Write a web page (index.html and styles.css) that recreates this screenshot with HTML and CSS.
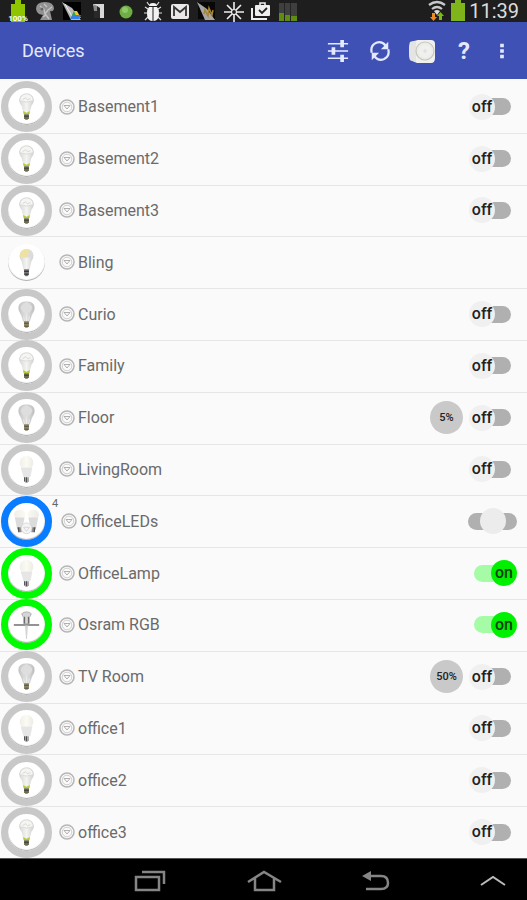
FILE: index.html
```html
<!DOCTYPE html>
<html lang="en">
<head>
    <meta charset="UTF-8">
    <meta name="viewport" content="width=device-width, initial-scale=1.0">
    <title>Devices</title>
    <link rel="stylesheet" href="styles.css">
</head>
<body>
    <!-- shared shapes -->
    <svg class="sprites" aria-hidden="true">
        <defs>
            <linearGradient id="glass" x1="0" x2="1">
                <stop offset="0" stop-color="#d6d6d4"/>
                <stop offset="0.5" stop-color="#f4f4f2"/>
                <stop offset="1" stop-color="#cfcfcf"/>
            </linearGradient>
            <linearGradient id="milk" x1="0" x2="1">
                <stop offset="0" stop-color="#f1f0e8"/>
                <stop offset="0.5" stop-color="#fbfaf3"/>
                <stop offset="1" stop-color="#ecebe4"/>
            </linearGradient>
            <linearGradient id="frost" x1="0" x2="1">
                <stop offset="0" stop-color="#c6c6c6"/>
                <stop offset="0.5" stop-color="#e2e2e2"/>
                <stop offset="1" stop-color="#bebebe"/>
            </linearGradient>
        </defs>
        <symbol id="bulb-green" viewBox="0 0 38 38">
            <path d="M11.500 12.500a7.500 7 0 0 1 15 0c0 3-1.500 4-2.500 6l-2 8h-6l-2-8c-1-2-2.500-3-2.500-6z" fill="url(#glass)"/>
            <path d="M12 13a7 7 0 0 1 14 0q-7 3-14 0z" fill="#f5f5f3" stroke="#d0d0cd" stroke-width=".7"/>
            <path d="M15 12l3-2 2 2 3-1" fill="none" stroke="#cfcfcb" stroke-width=".8"/>
            <path d="M15.500 23.500l3.500 2 3.500-2-.5 3.500h-6z" fill="#b5cc34"/>
            <path d="M16.500 27h5v4l-1.500 1.500h-2l-1.500-1.500z" fill="#6c6a50"/>
            <path d="M16.500 29h5" stroke="#34342a" stroke-width=".8"/>
        </symbol>
        <symbol id="bulb-clear" viewBox="0 0 38 38">
            <path d="M11 12q0-6 8-6t8 6c0 4-2 5-3 8l-2 6h-6l-2-6c-1-3-3-4-3-8z" fill="url(#frost)" stroke="#bdbdbd" stroke-width=".6"/>
            <path d="M13 12q1-4 6-4t6 4q-1 3-3 5h-6q-2-2-3-5z" fill="#dedede"/>
            <path d="M16 21l1 5M19 20v6M22 21l-1 5" stroke="#efefef" stroke-width=".8"/>
            <path d="M16.500 26h5v5l-1.500 1.500h-2l-1.500-1.500z" fill="#8b8467"/>
            <path d="M16.500 28h5M17 31h4" stroke="#45433a" stroke-width=".8"/>
        </symbol>
        <symbol id="bulb-white" viewBox="0 0 38 38">
            <path d="M12 12a7 7 0 0 1 14 0c0 2-1 4-2 5h-10c-1-1-2-3-2-5z" fill="url(#milk)"/>
            <path d="M13 17h12l-2 10h-7z" fill="#e6e6e6"/>
            <path d="M16.500 27h5v4l-1.500 1.500h-2l-1.500-1.500z" fill="#a5a5a5"/>
            <path d="M17 27v4M19 27v5" stroke="#444" stroke-width=".9"/>
        </symbol>
        <symbol id="bulb-yellow" viewBox="0 0 38 38">
            <path d="M12 12a7 7 0 0 1 14 0c0 3-1 4-2 6l-2 9h-6l-2-9c-1-2-2-3-2-6z" fill="url(#glass)"/>
            <path d="M12 13a7 7 0 0 1 10-7q-1 6-4 8z" fill="#efe2a0"/>
            <path d="M22 6a7 7 0 0 1 4 7l-8 1q3-3 4-8z" fill="#dcdcda"/>
            <path d="M16.500 26h5v5.500l-1.500 1.500h-2l-1.500-1.500z" fill="#777"/>
            <path d="M16.500 28h5M17 31h4" stroke="#222"/>
        </symbol>
        <symbol id="bulb-pair" viewBox="0 0 38 38">
            <path d="M6 12q1-5 6-5t6 5l-2 5H8zM20 12q1-5 6-5t6 5l-2 5h-8z" fill="url(#milk)"/>
            <path d="M7 15h10l-2 10H9zM21 15h10l-2 10h-6z" fill="#dcdcdc"/>
            <path d="M9 25h5v5h-3zM24 25h5l-2 5h-3z" fill="#8e8e8e"/>
            <path d="M11 25v5M27 25v5" stroke="#444"/>
            <circle cx="19" cy="26" r="5.500" fill="#f4f4f4" stroke="#d0d0d0" stroke-width=".8"/>
            <path d="M16 25h6l-3 4z" fill="none" stroke="#d0d0d0" stroke-width=".8"/>
        </symbol>
        <symbol id="spot" viewBox="0 0 38 38">
            <path d="M14 8q5-4 10 0l-2 4v6h-6v-6z" fill="#d5d5d5" stroke="#a5a5a5" stroke-width=".8"/>
            <path d="M17 11v7M21 11v7" stroke="#6c6c6c" stroke-width="1.200"/>
            <path d="M6 19.500h26" stroke="#858585" stroke-width="1.800"/>
            <path d="M17.500 20h3l-1 14h-1z" fill="#d4d4d4"/>
        </symbol>
        <symbol id="hub" viewBox="0 0 16 16">
            <circle cx="8" cy="8" r="7" fill="none" stroke="#b6b6b6" stroke-width="1.500"/>
            <circle cx="8" cy="8" r="4.800" fill="none" stroke="#cfcfcf"/>
            <path d="M5 6.500h6L8 10z" fill="#fafafa" stroke="#b0b0b0" stroke-linejoin="round"/>
        </symbol>
    </svg>

    <div class="status-bar">
        <div class="status-icons">
            <svg viewBox="0 0 20 22"><path d="M3 4h4V0h6v4h4v18H3z" fill="#8fc400"/><text x="10" y="21" class="tiny">100%</text></svg>
            <svg viewBox="0 0 20 22"><path d="M1 9q0-7 9-7t9 7q-1 3-4 2l2 9H5l3-5-4-1-2-2z" fill="#929292"/><path d="M5 6l4 3 1 5 3-4 4-3M8 17l3-2 3 4M9 4l3 3" fill="none" stroke="#c4c4c4" stroke-width="1.300"/><circle cx="7" cy="9" r="1.500" fill="#666"/></svg>
            <svg viewBox="0 0 20 22"><path d="M1 2h18v18H1z"/><path d="M0 2l10 6 9 12H9z" fill="#b7b7b7"/><path d="M3 4l8 14" stroke="#eee"/><path d="M8 19l4-8 4 4z" fill="#28a55d"/><path d="M12 11h3l4 7h-4z" fill="#f3c62d"/><path d="M8 19l3-4h8l-2 4z" fill="#377fe8"/></svg>
            <svg viewBox="0 0 20 22"><path d="M5 4h10v14H5z" fill="#292929"/><path d="M4 4h11v14h-4V8L8 6H4z" fill="#d8d8d8"/><path d="M4 4l4 2v5H5z" fill="#8a8a8a"/></svg>
            <svg viewBox="0 0 20 22"><circle cx="10" cy="12" r="6.500" fill="#6fae45"/><circle cx="9" cy="10" r="3" fill="#8fc868"/></svg>
            <svg viewBox="0 0 20 22"><path d="M6 5L4 2M14 5l2-3M5 9L2 7M15 9l3-2M4 13H1M16 13h3M5 17l-3 3M15 17l3 3" stroke="#ddd" stroke-width="1.200"/><path d="M6 6q0-3 4-3t4 3z" fill="#f2f2f2"/><path d="M9.500 7v14C5 21 4 17 4 13q0-4 2-6zM10.500 7v14c4.500 0 5.500-4 5.500-8q0-4-2-6z" fill="#f2f2f2"/></svg>
            <svg viewBox="0 0 20 22"><rect x="1" y="4" width="18" height="15" rx="2" fill="#e8e8e8"/><path d="M4 16V7l6 5 6-5v9" fill="none" stroke="#333" stroke-width="1.800"/></svg>
            <svg viewBox="0 0 20 22"><path d="M1 2h17v17H1z" fill="#080808"/><path d="M0 2l10 7 8 11H8z" fill="#a6a6a6"/><path d="M7 14l1-4 3 6 1-8 3 7 1-5" fill="none" stroke="#a78533" stroke-width="1.500"/></svg>
            <svg viewBox="0 0 20 22"><g stroke="#eee" stroke-width="1.600"><path d="M10 2v7M10 15v7M0 12h7M13 12h7M3 5l5 5M12 14l5 5M17 5l-5 5M8 14l-5 5"/></g><circle cx="10" cy="12" r="2.500" fill="none" stroke="#eee" stroke-width="1.200"/></svg>
            <svg viewBox="0 0 20 22"><path d="M1 8v11h15" fill="none" stroke="#eee" stroke-width="2"/><path d="M9 5V3h5v2" fill="none" stroke="#eee" stroke-width="1.600"/><rect x="4" y="5" width="15" height="11" rx="1" fill="#eee"/><path d="M8 10l3 3 5-5" fill="none" stroke="#222" stroke-width="1.800"/></svg>
            <svg viewBox="0 0 20 22"><path d="M1 3h18v18H1z" fill="#3f3f3f"/><path d="M1 13h5v8H1zM7 15h5v6H7zM13 16h6v5h-6z" fill="#5d8c10"/><path d="M6.500 3v18M12.500 3v18" stroke="#252525"/></svg>
        </div>
        <div class="status-right">
            <svg class="wifi" viewBox="0 0 20 22"><g fill="none" stroke="#c9c9c9" stroke-width="2.200"><path d="M2 5q8-6 16 0M5 9q5-4 10 0"/></g><path d="M7 11q3-2 6 0l-3 4z" fill="#ddd"/><path d="M5 13h3v4h2l-3.500 4L3 17h2z" fill="#f08a22"/><path d="M12 20h3v-4h2l-3.500-4-3.500 4h2z" fill="#7cba12"/></svg>
            <svg class="battery" viewBox="0 0 14 22"><path d="M0 3h4V0h6v3h4v18H0z" fill="#7fb51a"/></svg>
            <span class="clock">11:39</span>
        </div>
    </div>

    <header class="app-bar">
        <h1>Devices</h1>
        <div class="actions">
            <button type="button" aria-label="Settings"><svg viewBox="0 0 24 24"><g stroke="#e3eaff" fill="none"><path d="M1 4h22M1 12h22M1 20h22" stroke-width="1.600"/><path d="M16.500 0v8M7 8v8M16.500 16v8" stroke-width="4"/></g></svg></button>
            <button type="button" aria-label="Refresh"><svg viewBox="0 0 24 24"><g stroke="#e3eaff" fill="none" stroke-width="2.400"><path d="M3 14Q1 6 8 3q6-2 10 3M21 10q2 8-5 11-6 2-10-3"/></g><path d="M21 2v8h-8zM3 22v-8h8z" fill="#e3eaff"/></svg></button>
            <button type="button" aria-label="Hub"><svg class="wide" viewBox="0 0 28 26"><path d="M2 4l8-2h13q4 0 4 4v14q0 5-4 5H9l-7-3q-2-9 0-18z" fill="#f0f0ec"/><path d="M2 4l6-1v21l-6-2q-2-9 0-18z" fill="#e4e4e2"/><circle cx="17" cy="13" r="9" fill="#ebebe8" stroke="#c6c6c3" stroke-width="1.200"/><circle cx="17" cy="13" r="6.500" fill="#f0f0ee"/><path d="M15 13h4M17 11v4" stroke="#dcdcda"/></svg></button>
            <button type="button" class="help" aria-label="Help">?</button>
            <button type="button" class="more" aria-label="More"><svg viewBox="0 0 24 24"><path d="M10 4h4v4h-4zM10 10h4v4h-4zM10 16h4v4h-4z" fill="#e3eaff"/></svg></button>
        </div>
    </header>

    <ul class="devices">
        <li class="device">
            <span class="avatar"><svg><use href="#bulb-green"/></svg></span><span class="count"></span>
            <svg class="hub"><use href="#hub"/></svg><span class="name">Basement1</span>
            <label class="switch"><input type="checkbox" aria-label="Basement1"><span class="thumb">off</span></label>
        </li>
        <li class="device">
            <span class="avatar"><svg><use href="#bulb-green"/></svg></span><span class="count"></span>
            <svg class="hub"><use href="#hub"/></svg><span class="name">Basement2</span>
            <label class="switch"><input type="checkbox" aria-label="Basement2"><span class="thumb">off</span></label>
        </li>
        <li class="device">
            <span class="avatar"><svg><use href="#bulb-green"/></svg></span><span class="count"></span>
            <svg class="hub"><use href="#hub"/></svg><span class="name">Basement3</span>
            <label class="switch"><input type="checkbox" aria-label="Basement3"><span class="thumb">off</span></label>
        </li>
        <li class="device">
            <span class="avatar plain"><svg><use href="#bulb-yellow"/></svg></span><span class="count"></span>
            <svg class="hub"><use href="#hub"/></svg><span class="name">Bling</span>
        </li>
        <li class="device">
            <span class="avatar"><svg><use href="#bulb-clear"/></svg></span><span class="count"></span>
            <svg class="hub"><use href="#hub"/></svg><span class="name">Curio</span>
            <label class="switch"><input type="checkbox" aria-label="Curio"><span class="thumb">off</span></label>
        </li>
        <li class="device">
            <span class="avatar"><svg><use href="#bulb-green"/></svg></span><span class="count"></span>
            <svg class="hub"><use href="#hub"/></svg><span class="name">Family</span>
            <label class="switch"><input type="checkbox" aria-label="Family"><span class="thumb">off</span></label>
        </li>
        <li class="device">
            <span class="avatar"><svg><use href="#bulb-clear"/></svg></span><span class="count"></span>
            <svg class="hub"><use href="#hub"/></svg><span class="name">Floor</span>
            <span class="level">5%</span>
            <label class="switch"><input type="checkbox" aria-label="Floor"><span class="thumb">off</span></label>
        </li>
        <li class="device">
            <span class="avatar"><svg><use href="#bulb-white"/></svg></span><span class="count"></span>
            <svg class="hub"><use href="#hub"/></svg><span class="name">LivingRoom</span>
            <label class="switch"><input type="checkbox" aria-label="LivingRoom"><span class="thumb">off</span></label>
        </li>
        <li class="device">
            <span class="avatar group"><svg><use href="#bulb-pair"/></svg></span><span class="count">4</span>
            <svg class="hub"><use href="#hub"/></svg><span class="name">OfficeLEDs</span>
            <label class="switch mixed"><input type="checkbox" aria-label="OfficeLEDs"><span class="thumb"></span></label>
        </li>
        <li class="device">
            <span class="avatar lit"><svg><use href="#bulb-white"/></svg></span><span class="count"></span>
            <svg class="hub"><use href="#hub"/></svg><span class="name">OfficeLamp</span>
            <label class="switch on"><input type="checkbox" aria-label="OfficeLamp" checked><span class="thumb">on</span></label>
        </li>
        <li class="device">
            <span class="avatar lit"><svg><use href="#spot"/></svg></span><span class="count"></span>
            <svg class="hub"><use href="#hub"/></svg><span class="name">Osram RGB</span>
            <label class="switch on"><input type="checkbox" aria-label="Osram RGB" checked><span class="thumb">on</span></label>
        </li>
        <li class="device">
            <span class="avatar"><svg><use href="#bulb-clear"/></svg></span><span class="count"></span>
            <svg class="hub"><use href="#hub"/></svg><span class="name">TV Room</span>
            <span class="level">50%</span>
            <label class="switch"><input type="checkbox" aria-label="TV Room"><span class="thumb">off</span></label>
        </li>
        <li class="device">
            <span class="avatar"><svg><use href="#bulb-white"/></svg></span><span class="count"></span>
            <svg class="hub"><use href="#hub"/></svg><span class="name">office1</span>
            <label class="switch"><input type="checkbox" aria-label="office1"><span class="thumb">off</span></label>
        </li>
        <li class="device">
            <span class="avatar"><svg><use href="#bulb-green"/></svg></span><span class="count"></span>
            <svg class="hub"><use href="#hub"/></svg><span class="name">office2</span>
            <label class="switch"><input type="checkbox" aria-label="office2"><span class="thumb">off</span></label>
        </li>
        <li class="device">
            <span class="avatar"><svg><use href="#bulb-green"/></svg></span><span class="count"></span>
            <svg class="hub"><use href="#hub"/></svg><span class="name">office3</span>
            <label class="switch"><input type="checkbox" aria-label="office3"><span class="thumb">off</span></label>
        </li>
    </ul>

    <nav class="nav-bar">
        <button type="button" aria-label="Recent apps"><svg viewBox="0 0 36 24"><path d="M3 9h23v13H3z" stroke-width="2.500"/><path d="M9 4h22v12" stroke-width="2.500"/></svg></button>
        <button type="button" aria-label="Home"><svg viewBox="0 0 36 24"><path d="M1 14L17 4l17 10M8 10v12h19V10" stroke-width="2.500"/></svg></button>
        <button type="button" aria-label="Back"><svg viewBox="0 0 36 24"><path d="M8 8h12q7 0 7 7 0 6-7 6H5" stroke-width="2.500"/><path class="solid" d="M1 8l9-5v10z"/></svg></button>
        <button type="button" aria-label="Show panel"><svg viewBox="0 0 36 24"><path class="bright" d="M6 17l12-8 12 8" stroke-width="2"/></svg></button>
    </nav>
</body>
</html>
```
FILE: styles.css
```css
* {
    box-sizing: border-box;
}
body {
    font-family: Roboto, "Liberation Sans", sans-serif;
    background-color: #fafafa;
    margin: 0;
    display: flex;
    flex-direction: column;
    min-height: 100vh;
}
button {
    background: none;
    border: 0;
    padding: 0;
    margin: 0;
    font: inherit;
    color: inherit;
    display: flex;
    align-items: center;
    justify-content: center;
}
.sprites {
    position: absolute;
    width: 0;
    height: 0;
}

/* system status bar */
.status-bar {
    height: 22px;
    background-color: #1e1e1e;
    display: flex;
    justify-content: space-between;
    padding: 0 8px;
}
.status-icons {
    display: flex;
    gap: 7px;
}
.status-icons svg {
    width: 20px;
    height: 22px;
}
.tiny {
    font-size: 8px;
    font-weight: bold;
    fill: #fff;
    text-anchor: middle;
}
.status-right {
    display: flex;
    align-items: center;
    gap: 4px;
}
.wifi {
    width: 20px;
    height: 22px;
}
.battery {
    width: 14px;
    height: 22px;
}
.clock {
    color: #dcdcdc;
    font-size: 20px;
    line-height: 22px;
}

/* title and actions */
.app-bar {
    height: 57px;
    background-color: #3f51b5;
    color: #e3eaff;
    display: flex;
    align-items: center;
    justify-content: space-between;
    padding: 0 12px 0 22px;
}
.app-bar h1 {
    margin: 0;
    font-size: 18px;
    font-weight: normal;
}
.actions {
    display: flex;
    gap: 8px;
}
.actions button {
    width: 34px;
    height: 34px;
}
.actions .more {
    width: 26px;
}
.actions svg {
    width: 22px;
    height: 22px;
}
.actions .wide {
    width: 28px;
    height: 26px;
}
.actions .help {
    font-size: 24px;
    font-weight: bold;
}

/* device list */
.devices {
    flex: 1;
    list-style: none;
    margin: 0;
    padding: 2px 0 0;
    display: flex;
    flex-direction: column;
}
.device {
    flex: 1 0 51px;
    display: flex;
    align-items: center;
    padding: 0 10px 0 1px;
    box-shadow: 0 1px 0 #e6e6e6;
}
.avatar {
    width: 51px;
    height: 51px;
    border: 7px solid #c8c8c8;
    border-radius: 50%;
    background-color: #fff;
    display: flex;
    align-items: center;
    justify-content: center;
    box-shadow: inset 0 -1px 1px #aaa;
    flex-shrink: 0;
}
.avatar svg {
    width: 37px;
    height: 37px;
}
.avatar.plain {
    border-color: transparent;
    background-clip: padding-box;
}
.avatar.group {
    border-color: #0a7cff;
}
.avatar.lit {
    border-color: #00fa00;
}
.count {
    align-self: flex-start;
    min-width: 7px;
    padding: 2px 3px 0 0;
    font-size: 11px;
    color: #666;
}
.hub {
    width: 16px;
    height: 16px;
    margin-right: 3px;
}
.name {
    flex: 1;
    font-size: 16px;
    color: #6a6a6a;
}
.level {
    width: 33px;
    height: 33px;
    border-radius: 50%;
    background-color: #c9c9c9;
    color: #222;
    font-size: 11px;
    font-weight: 500;
    line-height: 33px;
    text-align: center;
    margin-right: 5px;
}

/* on / off switch, the thumb lies over the track */
.switch {
    position: relative;
    width: 49px;
    height: 26px;
    display: flex;
    align-items: center;
}
.switch input {
    appearance: none;
    width: 34px;
    height: 17px;
    margin: 0 0 0 9px;
    border-radius: 9px;
    background-color: #b0b0b0;
}
.thumb {
    position: absolute;
    left: 1px;
    top: 0;
    width: 26px;
    height: 26px;
    border-radius: 50%;
    background-color: #f0f0f0;
    color: #222;
    font-size: 16px;
    font-weight: 500;
    line-height: 26px;
    text-align: center;
}
.switch.on input {
    margin-left: 6px;
    background-color: #a6fba6;
}
.switch.on .thumb {
    left: 23px;
    background-color: #00f000;
    color: #123c12;
}
.switch.mixed input {
    width: 49px;
    margin-left: 0;
}
.switch.mixed .thumb {
    left: 12px;
    background-color: #ececec;
}

/* system navigation */
.nav-bar {
    position: relative;
    height: 42px;
    background-color: #000;
    border-top: 1px solid #555;
    display: flex;
    align-items: center;
    justify-content: flex-end;
    gap: 78px;
    padding-right: 16px;
}
.nav-bar svg {
    width: 36px;
    height: 24px;
    fill: none;
    stroke: #858585;
}
.nav-bar .solid {
    fill: #858585;
    stroke: none;
}
.nav-bar .bright {
    stroke: #bbb;
}
```
